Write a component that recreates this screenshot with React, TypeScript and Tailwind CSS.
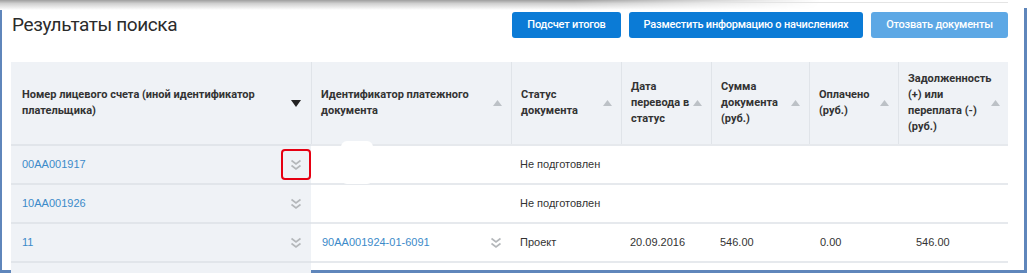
import React from 'react';

const cols = ['w-[300px]', 'w-[200px]', 'w-[110px]', 'w-[90px]', 'w-[98px]', 'w-[89px]', 'w-[110px]'];

const headers = [
  'Номер лицевого счета (иной идентификатор\nплательщика)',
  'Идентификатор платежного\nдокумента',
  'Статус\nдокумента',
  'Дата\nперевода в\nстатус',
  'Сумма\nдокумента\n(руб.)',
  'Оплачено\n(руб.)',
  'Задолженность\n(+) или\nпереплата (-)\n(руб.)',
];

type Row = {
  account: string;
  doc?: string;
  status: string;
  date?: string;
  sum?: string;
  paid?: string;
  debt?: string;
  marked?: boolean;
};

const rows: Row[] = [
  { account: '00AA001917', status: 'Не подготовлен', marked: true },
  { account: '10AA001926', status: 'Не подготовлен' },
  { account: '11', doc: '90AA001924-01-6091', status: 'Проект', date: '20.09.2016', sum: '546.00', paid: '0.00', debt: '546.00' },
];

function SortUp() {
  return (
    <svg width="9" height="6" viewBox="0 0 9 6" className="shrink-0">
      <path d="M0 6 L4.5 0 L9 6 Z" fill="#bcc1c6" />
    </svg>
  );
}

function SortDown() {
  return (
    <svg width="10" height="7" viewBox="0 0 10 7" className="shrink-0">
      <path d="M0 0 L10 0 L5 7 Z" fill="#222" />
    </svg>
  );
}

function Chevrons() {
  return (
    <svg width="12" height="12" viewBox="0 0 12 12" className="shrink-0">
      <polyline points="1.5,1.5 6,5 10.5,1.5" fill="none" stroke="#b4b7ba" strokeWidth="1.6" />
      <polyline points="1.5,6.5 6,10 10.5,6.5" fill="none" stroke="#b4b7ba" strokeWidth="1.6" />
    </svg>
  );
}

export default function App() {
  return (
    <div className="w-[1027px] h-[273px] bg-white overflow-hidden flex flex-col font-['Liberation_Sans',Arial,sans-serif]">
      {/* shadow left over from the panel above */}
      <div className="h-[8px] shrink-0 relative">
        <div className="absolute left-0 top-0 h-[10px] w-[820px] bg-[linear-gradient(to_bottom,#9e9e9e,#cfcfcf_35%,#fff)] [mask-image:linear-gradient(to_right,black_70%,transparent)]" />
        <div className="absolute left-[700px] top-[2px] h-[1px] w-[308px] bg-[#e4e4e4]" />
      </div>

      <div className="flex-1 border-l-2 border-r-[3px] border-b-[3px] border-[#5f86bb] pl-[9px] pr-[16px] flex flex-col min-h-0">
        <div className="flex items-start justify-between pt-[4px]">
          <h1 className="font-['Roboto',sans-serif] text-[19px] tracking-[-0.4px] leading-[24px] text-[#2b2b2b] ml-[1px] mt-[1px]">Результаты поиска</h1>
          <div className="flex gap-[8px] font-['Roboto',sans-serif] font-medium text-[11px] tracking-[-0.2px] text-white">
            <button className="w-[109px] h-[26px] rounded-[3px] bg-[#0b7bd6]">Подсчет итогов</button>
            <button className="w-[234px] h-[26px] rounded-[3px] bg-[#0b7bd6]">Разместить информацию о начислениях</button>
            <button className="w-[137px] h-[26px] rounded-[3px] bg-[#5da8e5]">Отозвать документы</button>
          </div>
        </div>

        <div className="mt-[24px] w-[997px] relative">
          {/* header */}
          <div className="flex h-[82px] bg-[#eff2f6] font-['Roboto',sans-serif] text-[11px] leading-[16px] font-bold text-[#333]">
            {headers.map((h, i) => (
              <div
                key={i}
                className={`${cols[i]} flex items-center justify-between ${i === 0 ? 'pl-[11px] pr-[10px]' : 'pl-[9px] pr-[9px] border-l border-[#e0e4e9]'}`}
              >
                <span className="whitespace-pre-line">{h}</span>
                {i === 0 ? <SortDown /> : <SortUp />}
              </div>
            ))}
          </div>

          {/* rows */}
          {[...rows, null].map((r, ri) => (
            <div key={ri} className="flex h-[39px] text-[11px] text-[#333]">
              <div className={`${cols[0]} bg-[#eff2f6] border-t-2 border-[#e1e5ea] flex items-center justify-between pl-[11px] pr-[9px]`}>
                <span className="text-[#3c8ac9]">{r?.account}</span>
                {r && (
                  <span className="relative">
                    <Chevrons />
                    {r.marked && (
                      <span className="absolute left-[-9px] top-[-10px] w-[30px] h-[31px] border-2 border-[#e60012] rounded-[4px]" />
                    )}
                  </span>
                )}
              </div>
              <div className={`${cols[1]} border-t-2 border-[#e6e9ed] flex items-center justify-between pl-[11px] pr-[9px]`}>
                <span className="text-[#3c8ac9]">{r?.doc}</span>
                {r?.doc && <Chevrons />}
              </div>
              <div className={`${cols[2]} border-t-2 border-[#e6e9ed] flex items-center pl-[9px]`}>{r?.status}</div>
              <div className={`${cols[3]} border-t-2 border-[#e6e9ed] flex items-center pl-[9px]`}>{r?.date}</div>
              <div className={`${cols[4]} border-t-2 border-[#e6e9ed] flex items-center pl-[9px]`}>{r?.sum}</div>
              <div className={`${cols[5]} border-t-2 border-[#e6e9ed] flex items-center pl-[11px]`}>{r?.paid}</div>
              <div className={`${cols[6]} border-t-2 border-[#e6e9ed] flex items-center pl-[18px]`}>{r?.debt}</div>
            </div>
          ))}

          {/* erased patch in the screenshot */}
          <div className="absolute left-[330px] top-[79px] w-[32px] h-[43px] bg-white rounded-[6px]" />
        </div>
      </div>
    </div>
  );
}
